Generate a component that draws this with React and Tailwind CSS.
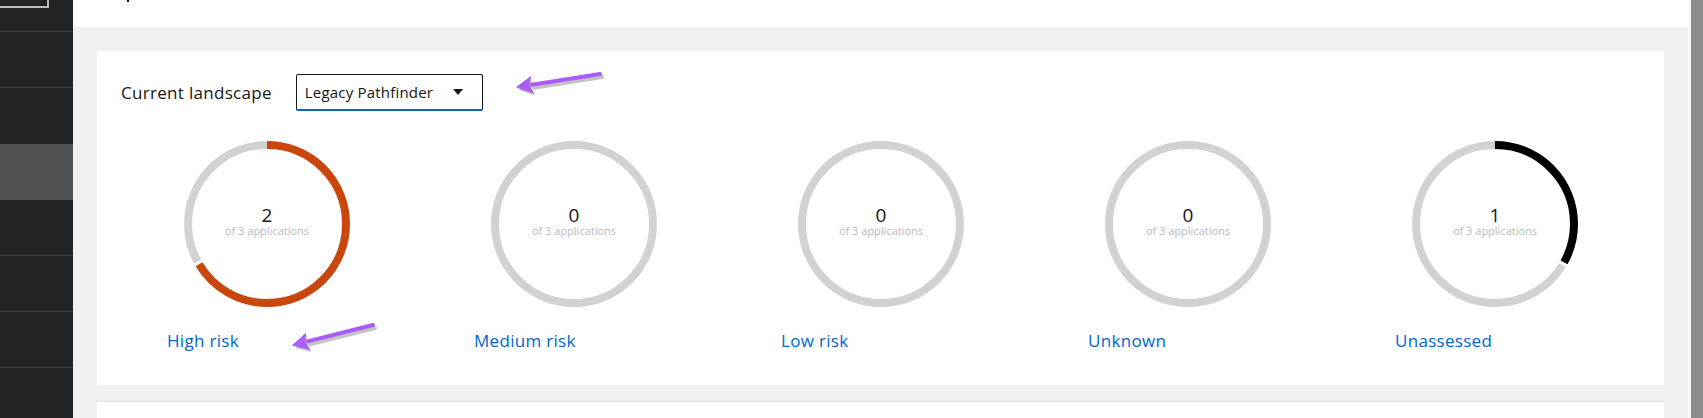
import React from "react";

const C = 2 * Math.PI * 79;

const risks = [
  { label: "High risk", value: 2, color: "#c9460d" },
  { label: "Medium risk", value: 0, color: "#f0ab00" },
  { label: "Low risk", value: 0, color: "#3e8635" },
  { label: "Unknown", value: 0, color: "#6a6e73" },
  { label: "Unassessed", value: 1, color: "#000000" },
];

const Arc = ({ from, to, color }) => {
  const gap = 1.5;
  const start = from * C + (from > 0 ? gap : 0);
  const len = Math.max(0, (to - from) * C - gap);
  return (
    <circle
      cx="83"
      cy="83"
      r="79"
      fill="none"
      stroke={color}
      strokeWidth="8"
      strokeDasharray={`${len} ${C}`}
      strokeDashoffset={-start}
      transform="rotate(-90 83 83)"
    />
  );
};

const Donut = ({ value, total, color }) => {
  const frac = value / total;
  return (
    <svg width="166" height="166" viewBox="0 0 166 166">
      {frac === 0 ? (
        <circle cx="83" cy="83" r="79" fill="none" stroke="#d2d2d2" strokeWidth="8" />
      ) : (
        <>
          <Arc from={0} to={frac} color={color} />
          <Arc from={frac} to={1} color="#d2d2d2" />
        </>
      )}
      <text x="83" y="81" textAnchor="middle" fontSize="19" fill="#151515">
        {value}
      </text>
      <text x="83" y="94" textAnchor="middle" fontSize="11" fill="#b8bbbe">
        of {total} applications
      </text>
    </svg>
  );
};

// annotation arrow, tip is where the head points
const Arrow = ({ tail, tip }) => {
  const dx = tip[0] - tail[0];
  const dy = tip[1] - tail[1];
  const l = Math.hypot(dx, dy);
  const ux = dx / l;
  const uy = dy / l;
  const bx = tip[0] - 15 * ux;
  const by = tip[1] - 15 * uy;
  const pts = `${tip[0]},${tip[1]} ${bx - 8 * uy},${by + 8 * ux} ${bx + 3 * ux},${by + 3 * uy} ${bx + 8 * uy},${by - 8 * ux}`;
  return (
    <g strokeLinecap="round" strokeLinejoin="round">
      <g transform="translate(2 3)" opacity="0.35">
        <line x1={tail[0]} y1={tail[1]} x2={bx} y2={by} stroke="#555" strokeWidth="4" />
        <polygon points={pts} fill="#555" />
      </g>
      <line x1={tail[0]} y1={tail[1]} x2={bx} y2={by} stroke="#a95cf6" strokeWidth="4" />
      <polygon points={pts} fill="#a95cf6" stroke="#a95cf6" strokeWidth="1" />
    </g>
  );
};

const navItems = [0, 1, 2, 3, 4, 5];

export default function App() {
  return (
    <div
      className="relative flex h-[418px] w-full overflow-hidden bg-white"
      style={{ fontFamily: '"Open Sans", "Liberation Sans", sans-serif' }}
    >
      {/* Sidebar */}
      <div className="flex w-[73px] shrink-0 flex-col bg-[#212427]">
        <div className="h-[32px] border-b border-[#3c3f42]">
          <div className="h-[8px] w-[49px] border-r-2 border-b-2 border-[#b8bbbe]" />
        </div>
        {navItems.map((i) => (
          <div
            key={i}
            className={
              i === 2
                ? "h-[56px] bg-[#4f5255]"
                : i === 1
                ? "h-[56px]"
                : "h-[56px] border-b border-[#3c3f42]"
            }
          />
        ))}
      </div>

      {/* Main */}
      <div className="flex min-w-0 flex-1 flex-col">
        <div className="h-[27px] shrink-0 bg-white pl-[54px]">
          <div className="h-[2px] w-[2px] bg-[#151515]" />
        </div>
        <div className="flex flex-1 flex-col gap-4 bg-[#f0f0f0] px-6 pt-6">
          <div className="bg-white px-6 pt-[23px] pb-[31px]">
            <div className="flex items-center gap-6">
              <span className="text-[17px] font-medium tracking-[0.3px] text-[#151515]">
                Current landscape
              </span>
              <div className="flex h-[37px] w-[187px] items-center justify-between rounded-[2px] border border-[#151515] border-b-2 border-b-[#0066cc] pr-[19px] pl-[8px]">
                <span className="text-[15px] tracking-[0.2px] text-[#151515]">Legacy Pathfinder</span>
                <svg width="10" height="6" viewBox="0 0 10 6">
                  <path d="M0 0h10L5 6z" fill="#151515" />
                </svg>
              </div>
            </div>

            <div className="-mx-2 mt-[30px] grid grid-cols-5">
              {risks.map((r) => (
                <div key={r.label} className="flex flex-col">
                  <div className="flex justify-center">
                    <Donut value={r.value} total={3} color={r.color} />
                  </div>
                  <span className="mt-[21px] pl-[54px] text-[17px] tracking-[0.3px] text-[#0066cc]">
                    {r.label}
                  </span>
                </div>
              ))}
            </div>
          </div>
          <div className="flex-1 border-t border-[#e4e4e4] bg-white" />
        </div>
      </div>

      {/* Scrollbar */}
      <div className="w-[3px] shrink-0 bg-[#f7f7f7]" />
      <div className="w-[12px] shrink-0 bg-[#8c8c8c]" />

      {/* Annotation arrows */}
      <svg className="pointer-events-none absolute top-0 left-0" width="1703" height="418">
        <Arrow tail={[600, 74]} tip={[517, 87]} />
        <Arrow tail={[373, 325]} tip={[293, 345]} />
      </svg>
    </div>
  );
}
